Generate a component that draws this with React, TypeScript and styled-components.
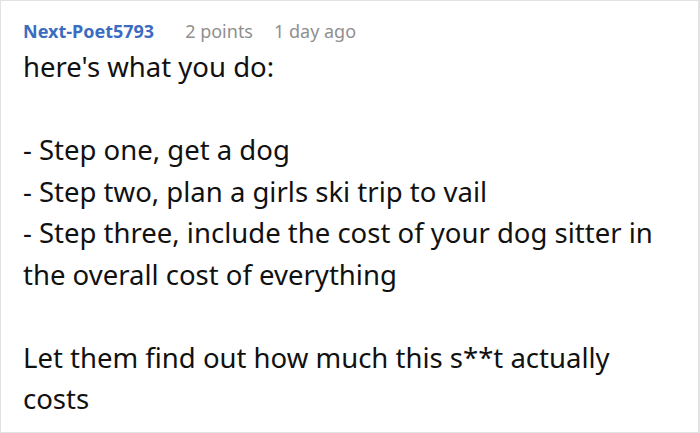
import styled, { createGlobalStyle } from "styled-components";

const GlobalStyle = createGlobalStyle`
  html, body {
    margin: 0;
    padding: 0;
    background: #ffffff;
  }
  body {
    font-family: "Noto Sans", "Open Sans", sans-serif;
  }
`;

const Card = styled.section`
  box-sizing: border-box;
  width: 700px;
  height: 433px;
  border: 1px solid #e2e2e2;
  border-right-width: 2px;
  padding: 18px 22px 0 22px;
  background: #ffffff;
  overflow: hidden;
`;

const Meta = styled.div`
  display: flex;
  align-items: baseline;
  gap: 31px;
  font-size: 18px;
  line-height: 24px;
`;

const Author = styled.span`
  color: #3b6cc0;
  font-weight: 700;
`;

const Info = styled.span<{ $tight?: boolean }>`
  color: #8f8f8f;
  margin-left: ${(p) => (p.$tight ? "-10px" : "0")};
`;

const Body = styled.div`
  margin-top: 3px;
  color: #111111;
  font-size: 27.5px;
  line-height: 41.5px;
`;

const Line = styled.p`
  margin: 0;
  min-height: 41.5px;
`;

const lines = [
  "here's what you do:",
  "",
  "- Step one, get a dog",
  "- Step two, plan a girls ski trip to vail",
  "- Step three, include the cost of your dog sitter in the overall cost of everything",
  "",
  "Let them find out how much this s**t actually costs",
];

export default function App() {
  return (
    <>
      <GlobalStyle />
      <Card>
        <Meta>
          <Author>Next-Poet5793</Author>
          <Info>2 points</Info>
          <Info $tight>1 day ago</Info>
        </Meta>
        <Body>
          {lines.map((l, i) => (
            <Line key={i}>{l}</Line>
          ))}
        </Body>
      </Card>
    </>
  );
}
